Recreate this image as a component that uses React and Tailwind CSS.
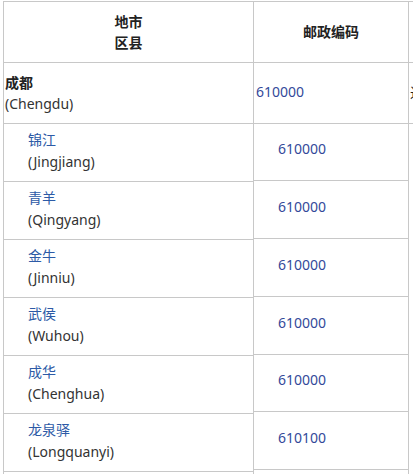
import React from "react";

const subs = [
  ["锦江", "(Jingjiang)", "610000"],
  ["青羊", "(Qingyang)", "610000"],
  ["金牛", "(Jinniu)", "610000"],
  ["武侯", "(Wuhou)", "610000"],
  ["成华", "(Chenghua)", "610000"],
  ["龙泉驿", "(Longquanyi)", "610100"],
];

const font = { fontFamily: '"Noto Sans", "Noto Sans CJK SC", sans-serif' };

export default function App() {
  return (
    <div
      className="w-[413px] h-[474px] overflow-hidden bg-white text-[14px] text-[#333]"
      style={font}
    >
      <div className="flex pt-[1px] pl-[3px] w-[700px]">
        {/* Column 1 */}
        <div className="w-[250px] shrink-0 flex flex-col border-l border-t border-[#c8c8c8]">
          <div className="h-[61px] border-b border-[#c8c8c8] flex flex-col items-center justify-center font-bold leading-[21px] text-[#222]">
            <span>地市</span>
            <span>区县</span>
          </div>
          <div className="h-[61px] border-b border-[#c8c8c8] flex flex-col justify-center pl-[1px] leading-[21px]">
            <span className="font-bold text-[#222]">成都</span>
            <span>(Chengdu)</span>
          </div>
          {subs.map(([zh, en]) => (
            <div
              key={zh}
              className="h-[58px] shrink-0 border-b border-[#c8c8c8] flex flex-col justify-center pl-[24px] pb-[3px] leading-[22px]"
            >
              <span className="text-[#2d5aa6]">{zh}</span>
              <span>{en}</span>
            </div>
          ))}
          <div className="h-[58px] shrink-0"></div>
        </div>
        {/* Column 2 */}
        <div className="w-[155px] shrink-0 flex flex-col border-l border-t border-[#c8c8c8]">
          <div className="h-[61px] border-b border-[#c8c8c8] flex items-center justify-center font-bold text-[#222] pb-[2px]">
            邮政编码
          </div>
          <div className="h-[60.5px] border-b border-[#c8c8c8] flex items-center pl-[2px] pb-[2px] text-[#33499a]">
            610000
          </div>
          {subs.map(([zh, , code]) => (
            <div
              key={zh}
              className="h-[57.75px] shrink-0 border-b border-[#c8c8c8] flex items-center pl-[24px] pb-[6px] text-[#33499a]"
            >
              {code}
            </div>
          ))}
          <div className="h-[58px] shrink-0"></div>
        </div>
        {/* Column 3 (cut off at the window edge) */}
        <div className="w-[200px] shrink-0 flex flex-col border-l border-t border-[#c8c8c8]">
          <div className="h-[61px] border-b border-[#c8c8c8]"></div>
          <div className="h-[60.5px] border-b border-[#c8c8c8] flex items-center pl-[1px] text-[#222]">
            进
          </div>
          <div className="h-[400px] shrink-0"></div>
        </div>
      </div>
    </div>
  );
}
